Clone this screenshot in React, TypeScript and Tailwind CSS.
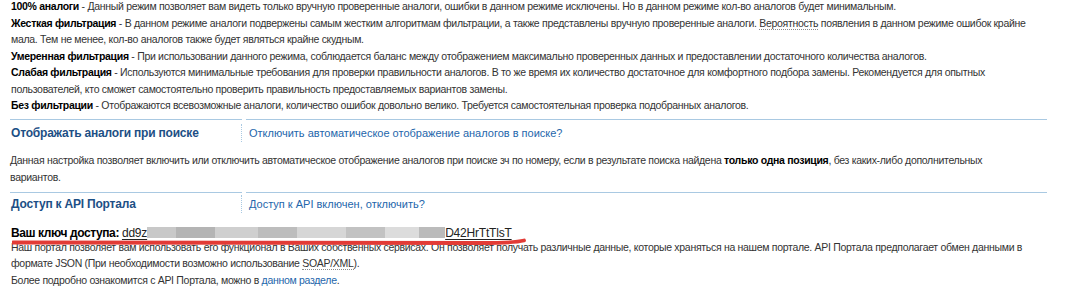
import React from "react";

const Dotted = ({ children }: { children: React.ReactNode }) => (
  <span className="border-b border-dotted border-[#8a8a8a]">{children}</span>
);

const Blur = ({ w, shade }: { w: number; shade: string }) => (
  <span className={`inline-block h-[11px] align-[-1px] ${shade}`} style={{ width: w }} />
);

export default function App() {
  return (
    <div className="w-[1067px] h-[306px] overflow-hidden bg-white text-[#333] text-[10.5px] tracking-[-0.3px] font-['Liberation_Sans',sans-serif]">
      <div className="pl-[11px] -mt-[2px] leading-[16.5px] whitespace-nowrap">
        <div>
          <b className="text-black">100% аналоги</b> - Данный режим позволяет вам видеть только вручную проверенные аналоги, ошибки в данном режиме исключены. Но в данном режиме кол-во аналогов будет минимальным.
        </div>
        <div>
          <b className="text-black">Жесткая фильтрация</b> - В данном режиме аналоги подвержены самым жестким алгоритмам фильтрации, а также представлены вручную проверенные аналоги. <Dotted>Вероятность</Dotted> появления в данном режиме ошибок крайне
          <br />
          мала. Тем не менее, кол-во аналогов также будет являться крайне скудным.
        </div>
        <div>
          <b className="text-black">Умеренная фильтрация</b> - При использовании данного режима, соблюдается баланс между отображением максимально проверенных данных и предоставлении достаточного количества аналогов.
        </div>
        <div>
          <b className="text-black">Слабая фильтрация</b> - Используются минимальные требования для проверки правильности аналогов. В то же время их количество достаточное для комфортного подбора замены. Рекомендуется для опытных
          <br />
          пользователей, кто сможет самостоятельно проверить правильность предоставляемых вариантов замены.
        </div>
        <div>
          <b className="text-black">Без фильтрации</b> - Отображаются всевозможные аналоги, количество ошибок довольно велико. Требуется самостоятельная проверка подобранных аналогов.
        </div>
      </div>

      <div className="ml-[10px] w-[1037px] mt-[5px]">
        <div className="flex gap-[4px]">
          <div className="w-[232px] border-t border-[#a9c9e2] pt-[4px]">
            <div className="border-r border-dotted border-[#a9c9e2] pl-[1px] text-[#1d4f85] font-bold text-[12px] tracking-[-0.2px] leading-[18px]">Отображать аналоги при поиске</div>
          </div>
          <div className="flex-1 border-t border-[#a9c9e2] pt-[4px]">
            <div className="pl-[3px] leading-[18px] text-[#2466ab] text-[11px] tracking-normal">
              Отключить автоматическое отображение аналогов в поиске?
            </div>
          </div>
        </div>
        <div className="pt-[10px] pb-[6px] leading-[17px] text-[#333] whitespace-nowrap">
          Данная настройка позволяет включить или отключить автоматическое отображение аналогов при поиске зч по номеру, если в результате поиска найдена <b className="text-black">только одна позиция</b>, без каких-либо дополнительных
          <br />
          вариантов.
        </div>
        <div className="flex gap-[4px]">
          <div className="w-[232px] border-t border-[#a9c9e2] pt-[2px]">
            <div className="border-r border-dotted border-[#a9c9e2] pl-[1px] text-[#1d4f85] font-bold text-[12px] tracking-[-0.2px] leading-[18px]">Доступ к API Портала</div>
          </div>
          <div className="flex-1 border-t border-[#a9c9e2] pt-[2px]">
            <div className="pl-[3px] leading-[18px] text-[#2466ab] text-[11px] tracking-normal">
              Доступ к API включен, отключить?
            </div>
          </div>
        </div>
      </div>

      <div className="pl-[11px] mt-[11px]">
        <div className="relative z-10 bg-white h-[15px] w-[560px] text-[12px] leading-[18px] whitespace-nowrap">
          <b className="text-black tracking-[-0.4px]">Ваш ключ доступа: </b>
          <span className="text-[#222] underline underline-offset-2 tracking-[-0.2px]">
            dd9z<Blur w={29} shade="bg-[#c8c8c8]" /><Blur w={39} shade="bg-[#b4b4b4]" /><Blur w={43} shade="bg-[#cfcfcf]" /><Blur w={39} shade="bg-[#bdbdbd]" /><Blur w={49} shade="bg-[#d6d6d6]" /><Blur w={39} shade="bg-[#c2c2c2]" /><Blur w={34} shade="bg-[#dcdcdc]" /><Blur w={26} shade="bg-[#bbbbbb]" />D42HrTtTlsT
          </span>
          <svg className="absolute left-[1px] top-[14px]" width="514" height="8" viewBox="0 0 514 8">
            <path d="M1 4.5 L470 5 Q502 5 512 2.5" stroke="#e23b36" strokeWidth="3.8" fill="none" strokeLinecap="round" />
          </svg>
        </div>
        <div className="leading-[16.5px] whitespace-nowrap">
          Наш портал позволяет вам использовать его функционал в Ваших собственных сервисах. Он позволяет получать различные данные, которые храняться на нашем портале. API Портала предполагает обмен данными в
          <br />
          формате JSON (При необходимости возможно использование <Dotted>SOAP/XML</Dotted>).
        </div>
        <div className="leading-[16.5px]">
          Более подробно ознакомится с API Портала, можно в <span className="text-[#2466ab]">данном разделе</span>.
        </div>
      </div>
    </div>
  );
}
